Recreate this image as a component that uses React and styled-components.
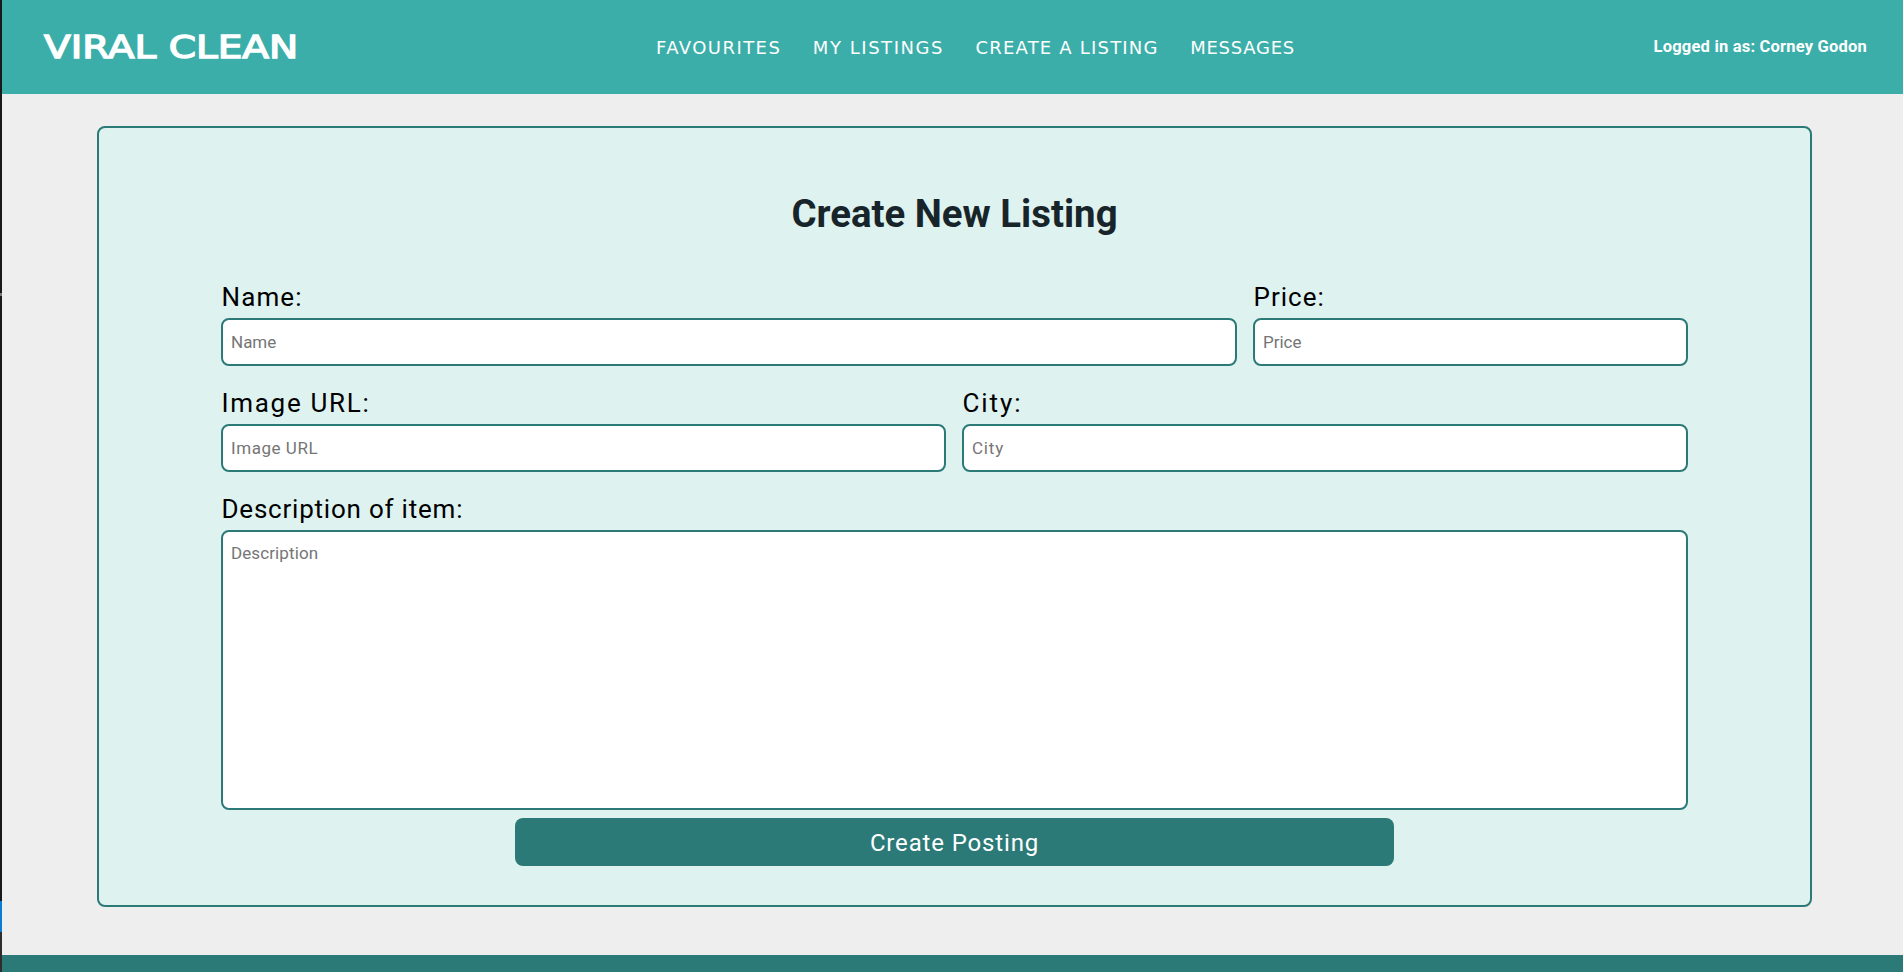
import React from 'react';
import styled, { createGlobalStyle } from 'styled-components';

const colors = {
  teal: '#3caeaa',
  deep: '#2b7a77',
  mint: '#def2f0',
  page: '#eeeeee',
  ink: '#17252a',
};

const GlobalStyle = createGlobalStyle`
  *, *::before, *::after { box-sizing: border-box; }
  body { margin: 0; background: ${colors.page}; font-family: Roboto, sans-serif; overflow: hidden; }
`;

const Shell = styled.div`
  display: flex;
  height: 100vh;
  background: ${colors.page};
`;

const Edge = styled.div`
  display: flex;
  flex-direction: column;
  flex: 0 0 2px;
  background: #18191a;
`;

const EdgeMark = styled.div`
  height: ${(p) => p.$size}px;
  margin-top: ${(p) => p.$before}px;
  background: ${(p) => p.$color};
`;

const Page = styled.div`
  display: flex;
  flex-direction: column;
  flex: 1;
  min-width: 0;
`;

const Header = styled.header`
  display: flex;
  align-items: center;
  height: 94px;
  padding: 0 36px 0 42px;
  background: ${colors.teal};
  color: #feffff;
  white-space: nowrap;
`;

const Logo = styled.div`
  flex: 0 0 612px;
  padding-bottom: 1px;
  font: 32px 'DejaVu Sans', sans-serif;
  -webkit-text-stroke: 1.4px currentColor;
  transform: scaleX(1.22);
  transform-origin: left center;
`;

const Nav = styled.nav`
  display: flex;
  gap: 31.5px;
  padding-top: 1px;
`;

const NavLink = styled.a`
  font: 18px 'DejaVu Sans', sans-serif;
  letter-spacing: ${(p) => p.$track}px;
`;

const User = styled.div`
  margin-left: auto;
  padding-bottom: 2px;
  font-size: 16.5px;
  font-weight: 700;
  letter-spacing: 0.2px;
`;

const Main = styled.main`
  flex: 1;
  padding: 32px 91px 48px 95px;
`;

const Card = styled.form`
  display: flex;
  flex-direction: column;
  height: 781px;
  padding: 64px 122px 39px;
  border: 2px solid ${colors.deep};
  border-radius: 8px;
  background: ${colors.mint};
`;

const Title = styled.h1`
  margin: 0 0 42px;
  color: ${colors.ink};
  font-size: 38.4px;
  font-weight: 700;
  line-height: 44px;
  text-align: center;
`;

const FieldRow = styled.div`
  display: grid;
  grid-template-columns: ${(p) => p.$columns};
  column-gap: 16px;
  margin-bottom: ${(p) => (p.$last ? 8 : 18)}px;
`;

const Field = styled.div`
  display: flex;
  flex-direction: column;
  min-width: 0;
`;

const Label = styled.label`
  padding-left: 0.5px;
  color: #000;
  font-size: 26px;
  line-height: 39px;
  padding-bottom: 1px;
  letter-spacing: ${(p) => p.$track}px;
`;

const Input = styled.input`
  width: 100%;
  height: 48px;
  padding: 0 8px;
  border: 2px solid ${colors.deep};
  border-radius: 8px;
  background: #fff;
  font: 17px Roboto, sans-serif;
  letter-spacing: ${(p) => p.$track}px;
  &::placeholder { color: #757575; }
`;

const TextArea = styled(Input).attrs({ as: 'textarea' })`
  display: block;
  height: 280px;
  padding: 11px 8px;
  line-height: 20px;
  resize: none;
`;

const Submit = styled.button`
  align-self: center;
  width: 879px;
  height: 48px;
  padding: 1px 0 0;
  border: 0;
  border-radius: 8px;
  background: ${colors.deep};
  color: #feffff;
  font: 24px Roboto, sans-serif;
  letter-spacing: 0.85px;
`;

const Footer = styled.footer`
  height: 17px;
  background: ${colors.deep};
`;

const links = [
  { text: 'FAVOURITES', track: 1.45 },
  { text: 'MY LISTINGS', track: 1.55 },
  { text: 'CREATE A LISTING', track: 1.2 },
  { text: 'MESSAGES', track: 0.75 },
];

export default function App() {
  return (
    <>
      <GlobalStyle />
      <Shell>
        <Edge>
          <EdgeMark $before={293} $size={3} $color="#777" />
          <EdgeMark $before={605} $size={31} $color="#0b7bd3" />
          <EdgeMark $before={0} $size={40} $color="#2d2d2d" />
        </Edge>
        <Page>
          <Header>
            <Logo>VIRAL CLEAN</Logo>
            <Nav>
              {links.map((l) => (
                <NavLink key={l.text} $track={l.track}>{l.text}</NavLink>
              ))}
            </Nav>
            <User>Logged in as: Corney Godon</User>
          </Header>
          <Main>
            <Card>
              <Title>Create New Listing</Title>
              <FieldRow $columns="1016px 1fr">
                <Field>
                  <Label htmlFor="name" $track={1.1}>Name:</Label>
                  <Input id="name" placeholder="Name" $track={0} />
                </Field>
                <Field>
                  <Label htmlFor="price" $track={1}>Price:</Label>
                  <Input id="price" placeholder="Price" $track={0} />
                </Field>
              </FieldRow>
              <FieldRow $columns="725px 1fr">
                <Field>
                  <Label htmlFor="image" $track={1.7}>Image URL:</Label>
                  <Input id="image" placeholder="Image URL" $track={0.55} />
                </Field>
                <Field>
                  <Label htmlFor="city" $track={1.9}>City:</Label>
                  <Input id="city" placeholder="City" $track={0.8} />
                </Field>
              </FieldRow>
              <FieldRow $columns="1fr" $last>
                <Field>
                  <Label htmlFor="description" $track={0.78}>Description of item:</Label>
                  <TextArea id="description" placeholder="Description" $track={0.1} />
                </Field>
              </FieldRow>
              <Submit type="button">Create Posting</Submit>
            </Card>
          </Main>
          <Footer />
        </Page>
      </Shell>
    </>
  );
}
